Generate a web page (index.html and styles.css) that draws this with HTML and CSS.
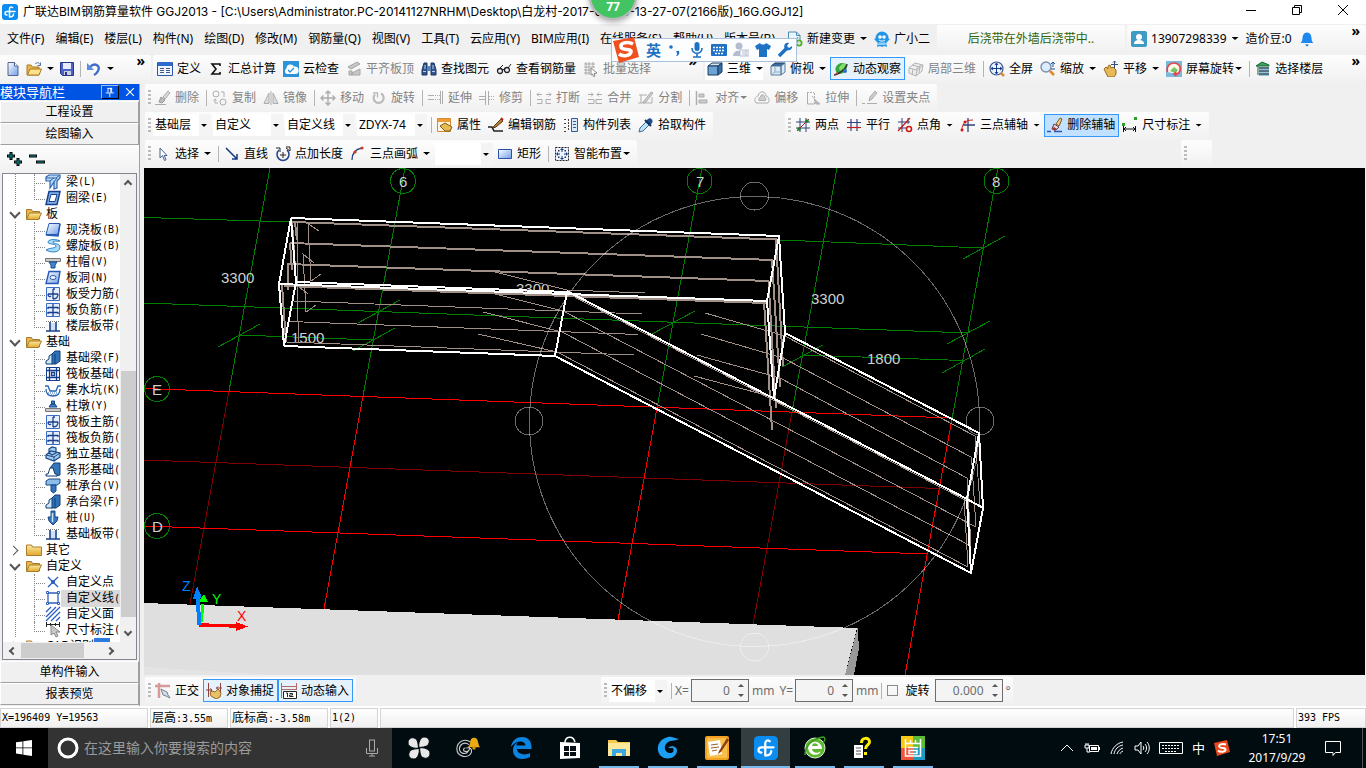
FILE: index.html
```html
<!DOCTYPE html>
<html lang="zh-CN">
<head>
    <meta charset="UTF-8">
    <meta name="viewport" content="width=device-width, initial-scale=1.0">
    <title>广联达BIM钢筋算量软件 GGJ2013</title>
    <link rel="stylesheet" href="styles.css">
</head>
<body>
    <!-- icon set -->
    <svg class="sprite" aria-hidden="true">
        <defs>
            <linearGradient id="blue" x1="0" y1="0" x2="1" y2="1"><stop offset="0" stop-color="#fff"/><stop offset="1" stop-color="#6f9fe8"/></linearGradient>
            <linearGradient id="gold" x1="0" y1="0" x2="0" y2="1"><stop offset="0" stop-color="#ffe9a0"/><stop offset="1" stop-color="#e0a92e"/></linearGradient>
        </defs>
        <symbol id="i-app" viewBox="0 0 16 16"><rect width="16" height="16" rx="3" fill="#0b8cf0"/><path d="M10.500 3.500C9 2.500 7.500 3 7.500 5v8M3 9.500C3 7.800 3.800 7.500 5 7.500h8M7.500 13c2.500 0 4-1 4-3M3 9.500c0 1 1 1.500 2 1.500" fill="none" stroke="#fff" stroke-width="1.500" stroke-linecap="round"/></symbol>
        <symbol id="i-new" viewBox="0 0 16 16"><path d="M3 1.500h6.500l3.500 3.500v9.500H3z" fill="url(#blue)" stroke="#55648c"/><path d="M9.500 1.500V5H13" fill="#fff" stroke="#55648c"/></symbol>
        <symbol id="i-open" viewBox="0 0 16 16"><path d="M1 14V4h4l1.500 2H13v8z" fill="#e8b64a" stroke="#a97a20"/><path d="M1.500 14L4 8h11.500L13 14z" fill="#ffe08a" stroke="#a97a20"/><path d="M9 3c2-2 4-1.500 5 .5m.5-2v3h-3" fill="none" stroke="#55759c"/></symbol>
        <symbol id="i-save" viewBox="0 0 16 16"><path d="M1.500 1.500h13v13h-11l-2-2z" fill="#4a62c8" stroke="#28368c"/><path d="M4 2h8v6H4z" fill="#e8ecfa"/><path d="M5 10h7v4H5z" fill="#c9cfdc"/><path d="M6 11h2v3H6z" fill="#28368c"/></symbol>
        <symbol id="i-undo" viewBox="0 0 16 16"><path d="M4 6c5-5 11-1 8 4-1 2-2 3-4 4" fill="none" stroke="#3e6ccc" stroke-width="2.400"/><path d="M1 2v7h7z" fill="#5d8be0"/></symbol>
        <symbol id="i-define" viewBox="0 0 16 16"><path d="M.5 1.500h15v13H.5z" fill="#eef4ff" stroke="#2c57a8"/><path d="M1 1h14v4H1z" fill="#2c6ccc"/><path d="M3 7.500h4M3 9.500h4M3 11.500h4M9 7.500h4M9 9.500h4M9 11.500h4" stroke="#44597c"/></symbol>
        <symbol id="i-sum" viewBox="0 0 16 16"><path d="M12 5V3H4l4 5-4 5h8v-2" fill="none" stroke="#111" stroke-width="1.600"/></symbol>
        <symbol id="i-cloud" viewBox="0 0 16 16"><rect width="16" height="16" fill="#2b93d8"/><path d="M4 13a3 3 0 0 1-.5-5.500A4 4 0 0 1 11 5.500a3.500 3.500 0 0 1 1.500 7.500z" fill="#fff"/><path d="M5 9l2 2 4-4" stroke="#2b93d8" stroke-width="1.400" fill="none"/></symbol>
        <symbol id="i-slab" viewBox="0 0 16 16"><path d="M2 6l9-5 3 2-9 5zM3 10h3v4H3zM6 12l8-4v6H6z" fill="#c8c8c8" stroke="#a4a4a4"/></symbol>
        <symbol id="i-find" viewBox="0 0 16 16"><path d="M1 14V9l2-7h3v12zM10 2h3l2 7v5h-5z" fill="#31558f" stroke="#1b3464"/><path d="M6 5h4v5H6z" fill="#5d83bd"/><path d="M2 10.500h3M11 10.500h3M4 4v4M12 4v4" stroke="#b9cdec"/></symbol>
        <symbol id="i-glasses" viewBox="0 0 16 16"><circle cx="4" cy="10" r="2.500" fill="#eef" stroke="#222" stroke-width="1.300"/><circle cx="11" cy="9" r="2.500" fill="#eef" stroke="#222" stroke-width="1.300"/><path d="M6 9l3-1M3 8l4-4M12 7l3-4" stroke="#222"/></symbol>
        <symbol id="i-batch" viewBox="0 0 16 16"><path d="M1 3h11M1 6h11M1 9h7M1 12h6M3 1v13M6 1v13M10 1v6" stroke="#aaa"/><path d="M8 7l6 5-3 .5 1 2.500-1.500.5-1-2.500L8 14z" fill="#fff" stroke="#888"/></symbol>
        <symbol id="i-cube" viewBox="0 0 16 16"><path d="M1 5l4-3h10l-4 3z" fill="#d4e5f6" stroke="#1e3c5c"/><path d="M1 5h10v9H1z" fill="#6da4d6" stroke="#1e3c5c"/><path d="M11 5l4-3v9l-4 3z" fill="#3570a8" stroke="#1e3c5c"/></symbol>
        <symbol id="i-top" viewBox="0 0 16 16"><path d="M1 5l4-3h10l-4 3z" fill="#3570a8" stroke="#1e3c5c"/><path d="M1 5h10v9H1zM11 5l4-3v9l-4 3z" fill="#dcebf8" stroke="#5a7a98"/><path d="M5 5v6h6M5 11l-4 3" stroke="#90aac4" fill="none"/></symbol>
        <symbol id="i-orbit" viewBox="0 0 16 16"><ellipse cx="8.500" cy="7.500" rx="6" ry="5" fill="#38a83c" transform="rotate(-35 8 8)"/><path d="M6 7c1-3 4-5 7-5l-2 5-4 3z" fill="#85df70"/><path d="M1 14c3 0 13-6 13-11" stroke="#333" stroke-width="1.400" fill="none"/><circle cx="12" cy="10" r="2" fill="#2c6fc8"/><path d="M1 14l4-4v3z" fill="#cc3528"/></symbol>
        <symbol id="i-part" viewBox="0 0 16 16"><path d="M1 7l6-5 8 2-1 6-6 5-7-3zM1 7l8 2 6-5M9 9l-1 6M4 4l8 2-1 6M5 8l-1 6M8 8l5-4" fill="#eee" stroke="#b4b4b4"/></symbol>
        <symbol id="i-full" viewBox="0 0 16 16"><circle cx="7.500" cy="7.500" r="6.500" fill="#eaf3ff" stroke="#3a5588" stroke-width="1.200"/><path d="M7.500 2v11M2 7.500h11M6 4l1.500-2L9 4M6 11l1.500 2L9 11M4 6L2 7.500 4 9M11 6l2 1.500L11 9" stroke="#153c8c" fill="none"/><path d="M12 12l3 3" stroke="#e08a30" stroke-width="2.500"/></symbol>
        <symbol id="i-zoom" viewBox="0 0 16 16"><circle cx="6" cy="6" r="5" fill="#dcecff" stroke="#7890b0" stroke-width="1.400"/><path d="M10 10l4 4" stroke="#e08a30" stroke-width="2.500"/><path d="M13 1v5M11 3l2-2 2 2M11 8h4" stroke="#234f94" fill="none"/></symbol>
        <symbol id="i-pan" viewBox="0 0 16 16"><path d="M1 8l2-2 2 2V5l2-1 1 3 2-1 3 3v4l-2 3H5z" fill="#e8b957" stroke="#946a24"/><path d="M11.500 0v7M8 3.500h7M10 1.500L11.500 0 13 1.500" stroke="#334f78" fill="none"/></symbol>
        <symbol id="i-rot" viewBox="0 0 16 16"><path d="M0 0h16v16H0z" fill="#7ab9dd"/><path d="M1.500 11C0 5 4 2 8 2s7 3 6 7c-.5 3-2 4-4 4" fill="#fff8e6" stroke="#e2454a" stroke-width="1.700"/><path d="M4 10l4-4 4 3-3 3z" fill="#73c46a"/><path d="M10.500 10v6l-4-3z" fill="#e2454a"/></symbol>
        <symbol id="i-floor" viewBox="0 0 16 16"><path d="M1 5l6-4 7 3v1z" fill="#37a55c" stroke="#1a6434"/><path d="M4 7h10M4 10h10M4 13h10" stroke="#27435e" stroke-width="1.500"/><path d="M4 8.500h10M4 11.500h10M4 14.500h10" stroke="#8fc6de"/><path d="M3 5v9" stroke="#1a6434"/></symbol>
        <symbol id="i-doc" viewBox="0 0 16 16"><path d="M1.500 1h8L13 4.500V13H1.500z" fill="#eaf6ff" stroke="#4e8cae"/><path d="M9.500 1v3.500H13M3 10c4 1 7-1 8-4" fill="none" stroke="#4e8cae"/><circle cx="12" cy="12" r="3.500" fill="#55ad2d"/><path d="M12 10v4M10 12h4" stroke="#fff"/></symbol>
        <symbol id="i-qq" viewBox="0 0 16 16"><circle cx="8" cy="7" r="6.500" fill="#2196e8"/><path d="M0 8l3-1v4zM16 8l-3-1v4zM4 11h8l1 5-3-1-2 1-2-1-3 1z" fill="#2196e8"/><path d="M4.500 11.500h7l.5 2.500H4z" fill="#8fd0f8"/><circle cx="6" cy="6" r="1.800" fill="#fff"/><circle cx="10" cy="6" r="1.800" fill="#fff"/><path d="M5 9c2 1.500 4 1.500 6 0" stroke="#fff" fill="none"/></symbol>
        <symbol id="i-user" viewBox="0 0 16 16"><rect width="16" height="16" rx="2" fill="#3e9bc4"/><circle cx="8" cy="6" r="3" fill="#fff"/><path d="M3 13c0-3 2-4 5-4s5 1 5 4z" fill="#fff"/></symbol>
        <symbol id="i-bell" viewBox="0 0 16 16"><path d="M1.500 12C4 10 3 7 4 4.500 5 .5 11 .5 12 4.500c1 2.500 0 5.500 2.500 7.500z" fill="#1e88f0"/><path d="M6 13.500h4L8 15.500z" fill="#1668c0"/></symbol>
        <!-- disabled edit tools -->
        <symbol id="i-brushg" viewBox="0 0 16 16"><path d="M0 14.500h11" stroke="#aaa"/><path d="M8 7l5-6 2 2-5 6z" fill="#d8d8d8" stroke="#aaa"/><path d="M4 12l2-5 4 3-3 3z" fill="#bbb" stroke="#999"/></symbol>
        <symbol id="i-copy" viewBox="0 0 16 16" fill="none" stroke="#adadad"><circle cx="4" cy="4" r="3"/><circle cx="11" cy="12" r="3"/><path d="M6 13H3V9M9 2h3v5M1.500 10.500L3 9l1.500 1.500"/></symbol>
        <symbol id="i-mirror" viewBox="0 0 16 16" fill="none" stroke="#adadad"><path d="M1 13.500L6 3v10.500zM15 13.500L10 3v10.500z" fill="#ddd"/><path d="M8 1v14"/></symbol>
        <symbol id="i-move" viewBox="0 0 16 16" fill="none" stroke="#adadad" stroke-width="1.400"><path d="M8 1v14M1 8h14M5.500 3.500L8 1l2.500 2.500M5.500 12.500L8 15l2.500-2.500M3.500 5.500L1 8l2.500 2.500M12.500 5.500L15 8l-2.500 2.500"/></symbol>
        <symbol id="i-rotate" viewBox="0 0 16 16" fill="none" stroke="#bbb" stroke-width="2.200"><path d="M10 3.500a5 5 0 1 1-6 1"/><path d="M2 3h4.500v4.500" stroke-width="1.400"/></symbol>
        <symbol id="i-extend" viewBox="0 0 16 16" fill="none" stroke="#adadad"><path d="M0 5.500h6M0 9.500h6"/><path d="M7 5.500h5M7 9.500h5" stroke-dasharray="1 1"/><path d="M12.500 1v13M14.500 1v13"/></symbol>
        <symbol id="i-trim" viewBox="0 0 16 16" fill="none" stroke="#adadad"><path d="M0 6.500h6M0 9.500h6M6.500 1v14M9.500 1v14"/><path d="M10 6.500h5M10 9.500h5" stroke-dasharray="1 1"/></symbol>
        <symbol id="i-break" viewBox="0 0 16 16" fill="none" stroke="#adadad"><path d="M1 9.500h5v4H1M15 9.500h-5v4h5M1 4.500h5M10 4.500h5M3 2.500l-2 2 2 2M13 2.500l2 2-2 2"/></symbol>
        <symbol id="i-merge" viewBox="0 0 16 16" fill="none" stroke="#adadad"><path d="M1 9.500h6v4H1M15 9.500H9v4h6M1 4.500h5M10 4.500h5M4 2.500l2 2-2 2M12 2.500l-2 2 2 2"/></symbol>
        <symbol id="i-split" viewBox="0 0 16 16" fill="none" stroke="#adadad"><path d="M1 5h8M0 13h14M3 5v8M14 7v6"/><path d="M6 11l7-9 2 1-7 9-3 1z" fill="#ccc"/></symbol>
        <symbol id="i-align" viewBox="0 0 16 16" fill="none" stroke="#adadad"><path d="M1.500 1v14" stroke-width="1.500"/><path d="M4 4h5v3H4zM4 10h8v3H4z" fill="#ccc"/></symbol>
        <symbol id="i-offset" viewBox="0 0 16 16" fill="none" stroke="#adadad"><path d="M2 13C-1 9 2 7 4 6c1-6 8-5 8 0 3 1 4 4 2 7z"/><path d="M5 10.500C4 8 6 8 6.500 7c0-3 4-3 4 0 1 1 2 2 1 3.500z" fill="#ccc"/></symbol>
        <symbol id="i-stretch" viewBox="0 0 16 16" fill="none" stroke="#adadad"><path d="M2.500 2v12h7"/><path d="M2 2.500h7M9.500 3v11M7 6l6 7" stroke-dasharray="2 1"/><path d="M10 10l5 4h-4z" fill="#bbb"/></symbol>
        <symbol id="i-grip" viewBox="0 0 16 16" fill="none" stroke="#adadad"><path d="M0 13.500h3M5 13.500h10"/><path d="M7 11l1-4 5-6 2 2-5 6z" fill="#ccc"/></symbol>
        <!-- component toolbar -->
        <symbol id="i-prop" viewBox="0 0 16 16"><path d="M.5 1.500h13v13H.5z" fill="#fff4df" stroke="#d98a2b"/><path d="M1 2h12v3H1z" fill="#ee9c38"/><path d="M3 9l5-3 7 4-2 4H8z" fill="#e8bb52" stroke="#7d5b1c"/></symbol>
        <symbol id="i-editbar" viewBox="0 0 16 16"><path d="M0 10h4l2 4h9" stroke="#222" stroke-width="1.600" fill="none"/><path d="M6 9l7-7 2 2-7 6-3 1z" fill="#b97e33" stroke="#5b3a12"/><path d="M13 1l2 2" stroke="#c22" stroke-width="2"/></symbol>
        <symbol id="i-list" viewBox="0 0 16 16"><path d="M1 2.500h3M1 6.500h3M1 10.500h3M1 14.500h3M5.500 2v12" stroke="#444" stroke-dasharray="2 1"/><path d="M8.500 1.500h6v13h-6z" fill="#dce8fb" stroke="#345a98"/><path d="M10 4.500h3M10 7.500h3M10 10.500h3" stroke="#345a98"/></symbol>
        <symbol id="i-pick" viewBox="0 0 16 16"><path d="M1 15l1-4 6-6 3 3-6 6z" fill="#bfe2f8" stroke="#3f6c94"/><path d="M8 4l2-2c2-2 6 1 4 4l-2 2z" fill="#1f4e8c"/><path d="M7 3l6 6" stroke="#10305c" stroke-width="2"/></symbol>
        <symbol id="i-p2" viewBox="0 0 16 16"><path d="M5 1v14M11 1v14M1 5h14M1 11h14" stroke="#30427a"/><path d="M2 14L14 2" stroke="#b82020"/><circle cx="4" cy="12" r="1.800" fill="#208020"/><circle cx="12" cy="4" r="1.800" fill="#208020"/></symbol>
        <symbol id="i-par" viewBox="0 0 16 16"><path d="M5 2v12M11 2v12M1 5.500h14" stroke="#30427a" stroke-width="1.200"/><path d="M1 10.500h14" stroke="#c02020" stroke-width="1.200"/></symbol>
        <symbol id="i-ang" viewBox="0 0 16 16"><path d="M5 1v14M1 5h12M1 11h8M11 1v6" stroke="#30427a"/><path d="M1 14L13 1" stroke="#d01818" stroke-width="1.200"/><circle cx="12" cy="12" r="2.500" stroke="#d01818" fill="none" stroke-width="1.600"/></symbol>
        <symbol id="i-arcaxis" viewBox="0 0 16 16"><path d="M8 1v14M3 8h12" stroke="#30427a" stroke-width="1.300"/><path d="M2 13C2 6 6 3 13 3" stroke="#d01818" fill="none"/><circle cx="2" cy="13" r="1.500" fill="#d01818"/><circle cx="5" cy="5" r="1.500" fill="#d01818"/></symbol>
        <symbol id="i-brush" viewBox="0 0 16 16"><path d="M0 14.500h4M7 14.500h8" stroke="#2c57b0" stroke-width="1.600"/><path d="M9 7l4-6 2 1-3 7z" fill="#f0d088" stroke="#7d5b1c"/><path d="M5 12l2-5 5 3-3 3z" fill="#dde" stroke="#6a3a4c"/><path d="M5 12l2-2 3 2-2 2z" fill="#a83430"/></symbol>
        <symbol id="i-dim" viewBox="0 0 16 16"><path d="M1.500 9v6M13.500 9v6M1 12h13M4 10l-2 2 2 2M11 10l2 2-2 2" stroke="#111" fill="none"/><path d="M0 6h3v3H0zM12 0h3v3h-3z" fill="#27a02c"/></symbol>
        <symbol id="i-arrow" viewBox="0 0 16 16"><path d="M5 2v10l2.500-2.500 2 5 1.500-.8-1.800-4.200H12z" fill="#fff" stroke="#44618c"/></symbol>
        <symbol id="i-line" viewBox="0 0 16 16"><path d="M2 2l11 11M13 8v5H8" stroke="#153a80" stroke-width="1.500" fill="none"/></symbol>
        <symbol id="i-ptlen" viewBox="0 0 16 16"><path d="M4 4a6 6 0 1 0 8 0" fill="none" stroke="#24448c" stroke-width="1.500"/><path d="M8 6v6M5 9h6M1 2h4v4M11 1h4v4l-4-3" stroke="#222" fill="none"/></symbol>
        <symbol id="i-arc3" viewBox="0 0 16 16"><path d="M2 14C2 7 6 3 12 2" stroke="#24448c" fill="none" stroke-width="1.300"/><circle cx="5" cy="6" r="1.600" fill="#d33a1e"/><circle cx="12" cy="2" r="1.600" fill="#d33a1e"/></symbol>
        <symbol id="i-rect" viewBox="0 0 16 16"><path d="M1.500 3.500h13v9h-13z" fill="url(#blue)" stroke="#2850a8"/></symbol>
        <symbol id="i-smart" viewBox="0 0 16 16"><path d="M1.500 1.500h13v13h-13z" fill="#edf4ff" stroke="#222" stroke-dasharray="2 1"/><path d="M8 2v4M8 10v4M2 8h4M10 8h4M6.500 3.500h3M6.500 12.500h3M3.500 6.500v3M12.500 6.500v3" stroke="#153a80"/><path d="M4 4h1.500v1.500H4zM10.500 4H12v1.500h-1.500zM4 10.500h1.500V12H4zM10.500 10.500H12V12h-1.500z" fill="#333"/></symbol>
        <symbol id="i-ortho" viewBox="0 0 16 16"><path d="M0 3h15M4 0v15" stroke="#d79a98" stroke-width="2.500"/><path d="M6 6l6 3 1 3 2 3-4-2-3-1z" fill="#d4dbe5" stroke="#5c6c82" stroke-width=".8"/></symbol>
        <symbol id="i-snap" viewBox="0 0 16 16"><path d="M2.500 0v14M0 7h6M14.500 0v9M10 5h6M4 5.500L6 7 4 8.500M12 3.500L10.500 5 12 6.500" stroke="#8f4040" fill="none"/><path d="M4 10l2-2 3 1 3-3 3 4-1 4-4 2-5-3z" fill="#eac066" stroke="#946a24"/></symbol>
        <symbol id="i-dyn" viewBox="0 0 16 16"><path d="M.5 0v15M15.500 0v6M0 3.500h16M0 6.500h16" stroke="#b56a6a"/><path d="M2.500 8.500h13v7h-13z" fill="#fff" stroke="#222"/><path d="M5 10h1.500v4M8.500 10.500h3V12h-3v1.500h4" stroke="#222" fill="none"/></symbol>
        <!-- tree -->
        <symbol id="t-open" viewBox="0 0 16 16"><path d="M.5 13V3.500h5l1 2h7V13z" fill="#e9b64b" stroke="#a67c2a"/><path d="M.5 13.500L3.500 7H15.500l-3 6.500z" fill="url(#gold)" stroke="#a67c2a"/></symbol>
        <symbol id="t-shut" viewBox="0 0 16 16"><path d="M.5 13.500V3h5l1 2h9v8.500z" fill="url(#gold)" stroke="#a67c2a"/></symbol>
        <symbol id="t-beam" viewBox="0 0 16 16"><path d="M1 3l3-2h11v3l-3 3v7l-3 1V8L5 14V7H1z" fill="#bcd8f4" stroke="#2a67b0" stroke-width="1.200"/><path d="M1 4h10l4-3M5 7l4-3M9 8l3-4" stroke="#2a67b0" fill="none"/></symbol>
        <symbol id="t-ring" viewBox="0 0 16 16"><path d="M4 1.500h11L12 14.500H1z" fill="#7fb0ea" stroke="#173f8c" stroke-width="1.500"/><path d="M6 4.500h6l-2 7H4z" fill="#fff" stroke="#173f8c"/></symbol>
        <symbol id="t-slab" viewBox="0 0 16 16"><path d="M4 1.500h11l-2 11H1z" fill="url(#blue)" stroke="#2458b4"/><path d="M1 13l12 1 2-12" stroke="#2458b4" stroke-width="1.500" fill="none"/></symbol>
        <symbol id="t-spiral" viewBox="0 0 16 16"><path d="M15 3C9 0 3 2 3 4c0 3 7 1 8 4 0 3-5 1-10 4 5 3 14 3 14-3 0-4-7-3-7-5 1-2 4 0 7-1z" fill="#a7dcfa" stroke="#3080c4"/></symbol>
        <symbol id="t-cap" viewBox="0 0 16 16"><path d="M.5 4.500h15v3H.5z" fill="#ccc" stroke="#777"/><path d="M4 8h8l-2 3v3H6v-3z" fill="#4188d8" stroke="#164888"/></symbol>
        <symbol id="t-hole" viewBox="0 0 16 16"><path d="M4 1.500h11l-2 12H1z" fill="url(#blue)" stroke="#2458b4" stroke-width="1.400"/><ellipse cx="8" cy="7.500" rx="3" ry="2" fill="#fff" stroke="#2458b4"/></symbol>
        <symbol id="t-force" viewBox="0 0 16 16"><path d="M1.500 1.500h13v13h-13z" fill="#e6effd" stroke="#3c6ec4"/><path d="M8 3v10M3 8h10M3 8c0 3 2 3 3 2M8 13c3 0 5-2 5-5M8 3h2" stroke="#173f8c" stroke-width="1.300" fill="none"/></symbol>
        <symbol id="t-neg" viewBox="0 0 16 16"><path d="M1.500 1.500h13v13h-13z" fill="#e6effd" stroke="#3c6ec4"/><path d="M8 2v12M3 5.500h10M3 10.500h10M3 5v2M13 5v2M3 10v2M13 10v2" stroke="#173f8c" stroke-width="1.300"/></symbol>
        <symbol id="t-band" viewBox="0 0 16 16"><path d="M1 3.500h14" stroke="#777" stroke-dasharray="1 1"/><path d="M1 13h14M5 4v9M11 4v9" stroke="#173f8c" stroke-width="1.600"/><path d="M6 5h4v7H6z" fill="#cfe0fa"/></symbol>
        <symbol id="t-fbeam" viewBox="0 0 16 16"><path d="M6 14V5l4-4h5v10l-4 3z" fill="#2e73ba" stroke="#123f74"/><path d="M1 14v-3l3-2V6l3-2v10zM10 14V4" fill="#cde4f8" stroke="#123f74"/></symbol>
        <symbol id="t-raft" viewBox="0 0 16 16"><path d="M1.500 1.500h13v13h-13z" fill="#fff" stroke="#123f8c"/><path d="M4.500 1v14M11.500 1v14M1 4.500h14M1 11.500h14M6.500 6.500h3v3h-3z" stroke="#123f8c" stroke-width="1.300" fill="none"/></symbol>
        <symbol id="t-pit" viewBox="0 0 16 16"><path d="M0 4h3l2 5h6l2-5h3M1 7c0 5 3 7 7 7s7-2 7-7" stroke="#2463b8" stroke-width="1.300" fill="none"/><path d="M3 11h10M6 13h5" stroke="#2463b8" stroke-dasharray="1 1"/></symbol>
        <symbol id="t-pier" viewBox="0 0 16 16"><path d="M4 9l2-3h4l2 3zM6.500 3h3v3h-3z" fill="#3e82d0" stroke="#164888"/><path d="M.5 10.500h15v3H.5z" fill="#ccc" stroke="#777"/></symbol>
        <symbol id="t-iso" viewBox="0 0 16 16"><path d="M1 9l5-4 9 2v4l-6 4-8-3zM4 3l3-2 4 1v5l-4 2-3-2z" fill="#a7cbee" stroke="#174a84" stroke-width="1.200"/><path d="M1 9l8 2 6-4M9 11v4" stroke="#174a84" fill="none"/></symbol>
        <symbol id="t-strip" viewBox="0 0 16 16"><path d="M5 6l4-5h6v12l-4 1z" fill="#3476bc" stroke="#123f74"/><path d="M1 14v-2h2l2-6h3l2 6h2v2z" fill="#fff" stroke="#123f74"/></symbol>
        <symbol id="t-pcap" viewBox="0 0 16 16"><path d="M1 3l3-2h11v4l-3 2H1z" fill="#8dbcea" stroke="#174a84"/><path d="M6 7h5v6l-2.500 2L6 13z" fill="#3476bc" stroke="#174a84"/></symbol>
        <symbol id="t-pile" viewBox="0 0 16 16"><path d="M6 1h4v6h3l-1 4-4 4-4-4-1-4h3z" fill="#3476bc" stroke="#174a84"/><path d="M7.500 3v9" stroke="#cfe4f8" stroke-width="1.500"/></symbol>
        <symbol id="t-pt" viewBox="0 0 16 16"><path d="M3 3l10 10M13 3L3 13" stroke="#2a5fc0" stroke-width="1.300"/><circle cx="8" cy="8" r="2" fill="#2a5fc0"/></symbol>
        <symbol id="t-ln" viewBox="0 0 16 16"><path d="M3 3h10v10H3z" fill="none" stroke="#2a5fc0" stroke-width="1.300"/><path d="M1.500 1.500h2v2h-2zM12.500 1.500h2v2h-2zM1.500 12.500h2v2h-2zM12.500 12.500h2v2h-2z" fill="#fff" stroke="#2a5fc0"/></symbol>
        <symbol id="t-face" viewBox="0 0 16 16"><path d="M1 6l5-5M1 11L11 1M1 15L15 1M6 15l9-9M11 15l4-4" stroke="#2a5fc0" stroke-width="1.300"/></symbol>
        <symbol id="t-dim" viewBox="0 0 16 16"><path d="M1.500 0v5M14.500 0v5M1 2.500h13M5.500 1v3M10.500 1v3" stroke="#222"/><path d="M6 3v10l3-2 2 4 2-1-2-4h4z" fill="#c8c8c8" stroke="#888"/></symbol>
        <symbol id="t-new" viewBox="0 0 16 16"><path d="M0 0h16v8H0z" fill="#2e7be0"/></symbol>
    </svg>

    <div class="app">
        <header class="titlebar">
            <svg class="ico"><use href="#i-app"/></svg>
            <h1>广联达BIM钢筋算量软件 GGJ2013 - [C:\Users\Administrator.PC-20141127NRHM\Desktop\白龙村-2017-09-25-13-27-07(2166版)_16G.GGJ12]</h1>
            <div class="winbtns">
                <button aria-label="最小化"><svg viewBox="0 0 12 12"><path d="M1 6.500h10"/></svg></button>
                <button aria-label="还原"><svg viewBox="0 0 12 12"><path d="M1.500 3.500h7v7h-7zM3.500 3.500v-2h7v7h-2"/></svg></button>
                <button aria-label="关闭"><svg viewBox="0 0 12 12"><path d="M1 1l10 10M11 1L1 11"/></svg></button>
            </div>
        </header>

        <div class="menubar">
            <nav>
                <a href="#">文件(F)</a><a href="#">编辑(E)</a><a href="#">楼层(L)</a><a href="#">构件(N)</a><a href="#">绘图(D)</a><a href="#">修改(M)</a><a href="#">钢筋量(Q)</a><a href="#">视图(V)</a><a href="#">工具(T)</a><a href="#">云应用(Y)</a><a href="#">BIM应用(I)</a><a href="#">在线服务(S)</a><a href="#">帮助(H)</a><a href="#">版本号(B)</a>
            </nav>
            <button class="btn"><svg class="ico"><use href="#i-doc"/></svg>新建变更<i class="tri"></i></button>
            <button class="btn"><svg class="ico"><use href="#i-qq"/></svg>广小二</button>
            <a class="strip notice" href="#">后浇带在外墙后浇带中..</a>
            <div class="strip account">
                <button class="btn"><svg class="ico"><use href="#i-user"/></svg>13907298339<i class="tri"></i></button>
                <button class="btn">造价豆:0</button>
                <button class="btn" aria-label="消息"><svg class="ico"><use href="#i-bell"/></svg></button>
                <span class="more">»</span>
            </div>
        </div>

        <div class="mainbar">
            <div class="strip quick">
                <button class="btn" aria-label="新建"><svg class="ico"><use href="#i-new"/></svg></button>
                <button class="btn" aria-label="打开"><svg class="ico"><use href="#i-open"/></svg><i class="tri"></i></button>
                <button class="btn" aria-label="保存"><svg class="ico"><use href="#i-save"/></svg></button>
                <i class="sep"></i>
                <button class="btn" aria-label="撤销"><svg class="ico"><use href="#i-undo"/></svg><i class="tri"></i></button>
                <span class="more">»</span>
            </div>
            <div class="strip tools">
                <button class="btn"><svg class="ico"><use href="#i-define"/></svg>定义</button>
                <button class="btn"><svg class="ico"><use href="#i-sum"/></svg>汇总计算</button>
                <button class="btn"><svg class="ico"><use href="#i-cloud"/></svg>云检查</button>
                <button class="btn" disabled><svg class="ico"><use href="#i-slab"/></svg>平齐板顶</button>
                <button class="btn"><svg class="ico"><use href="#i-find"/></svg>查找图元</button>
                <button class="btn"><svg class="ico"><use href="#i-glasses"/></svg>查看钢筋量</button>
                <button class="btn" disabled><svg class="ico"><use href="#i-batch"/></svg>批量选择</button>
                <span class="more">»</span>
            </div>
            <div class="strip view">
                <button class="btn drop"><svg class="ico"><use href="#i-cube"/></svg>三维<i class="tri"></i></button>
                <button class="btn"><svg class="ico"><use href="#i-top"/></svg>俯视<i class="tri"></i></button>
                <button class="btn on"><svg class="ico"><use href="#i-orbit"/></svg>动态观察</button>
                <button class="btn" disabled><svg class="ico"><use href="#i-part"/></svg>局部三维</button>
                <i class="sep"></i>
                <button class="btn"><svg class="ico"><use href="#i-full"/></svg>全屏</button>
                <button class="btn"><svg class="ico"><use href="#i-zoom"/></svg>缩放<i class="tri"></i></button>
                <button class="btn"><svg class="ico"><use href="#i-pan"/></svg>平移<i class="tri"></i></button>
                <button class="btn"><svg class="ico"><use href="#i-rot"/></svg>屏幕旋转<i class="tri tight"></i></button>
                <i class="sep"></i>
                <button class="btn"><svg class="ico"><use href="#i-floor"/></svg>选择楼层</button>
                <span class="more">»</span>
            </div>
        </div>

        <main>
            <aside>
                <div class="panelhead"><span>模块导航栏</span>
                    <button class="pin" aria-label="固定"><svg viewBox="0 0 15 11"><path d="M5.500 1v5M9.500 1v5M5 1.500h5M3 6.500h9M7.500 7v4M8.500 1v5"/></svg></button>
                    <button aria-label="关闭"><svg viewBox="0 0 9 9"><path d="M1 1l7 7M8 1L1 8"/></svg></button>
                </div>
                <button class="tab">工程设置</button>
                <button class="tab">绘图输入</button>
                <div class="expand">
                    <button aria-label="全部展开"><svg viewBox="0 0 16 16"><path d="M0 5h8M4 1v8M7 11h8M11 7v8" stroke="#000" stroke-width="3"/><path d="M1 5h6M4 2v6M8 11h6M11 8v6" stroke="#0a9090"/></svg></button>
                    <button aria-label="全部折叠"><svg viewBox="0 0 16 16"><path d="M0 5h8M7 11h9" stroke="#000" stroke-width="3"/><path d="M1 5h6M8 11h7" stroke="#0a9090"/></svg></button>
                </div>
                <div class="treebox">
                    <div class="treerow">
                        <ul class="tree">
                            <li class="leaf"><svg class="ico"><use href="#t-beam"/></svg>梁<b>(L)</b></li>
                            <li class="leaf end"><svg class="ico"><use href="#t-ring"/></svg>圈梁<b>(E)</b></li>
                            <li class="folder open"><svg class="ico"><use href="#t-open"/></svg>板</li>
                            <li class="leaf"><svg class="ico"><use href="#t-slab"/></svg>现浇板<b>(B)</b></li>
                            <li class="leaf"><svg class="ico"><use href="#t-spiral"/></svg>螺旋板<b>(B)</b></li>
                            <li class="leaf"><svg class="ico"><use href="#t-cap"/></svg>柱帽<b>(V)</b></li>
                            <li class="leaf"><svg class="ico"><use href="#t-hole"/></svg>板洞<b>(N)</b></li>
                            <li class="leaf"><svg class="ico"><use href="#t-force"/></svg>板受力筋<b>(</b></li>
                            <li class="leaf"><svg class="ico"><use href="#t-neg"/></svg>板负筋<b>(F)</b></li>
                            <li class="leaf end"><svg class="ico"><use href="#t-band"/></svg>楼层板带<b>(</b></li>
                            <li class="folder open"><svg class="ico"><use href="#t-open"/></svg>基础</li>
                            <li class="leaf"><svg class="ico"><use href="#t-fbeam"/></svg>基础梁<b>(F)</b></li>
                            <li class="leaf"><svg class="ico"><use href="#t-raft"/></svg>筏板基础<b>(</b></li>
                            <li class="leaf"><svg class="ico"><use href="#t-pit"/></svg>集水坑<b>(K)</b></li>
                            <li class="leaf"><svg class="ico"><use href="#t-pier"/></svg>柱墩<b>(Y)</b></li>
                            <li class="leaf"><svg class="ico"><use href="#t-force"/></svg>筏板主筋<b>(</b></li>
                            <li class="leaf"><svg class="ico"><use href="#t-neg"/></svg>筏板负筋<b>(</b></li>
                            <li class="leaf"><svg class="ico"><use href="#t-iso"/></svg>独立基础<b>(</b></li>
                            <li class="leaf"><svg class="ico"><use href="#t-strip"/></svg>条形基础<b>(</b></li>
                            <li class="leaf"><svg class="ico"><use href="#t-pcap"/></svg>桩承台<b>(V)</b></li>
                            <li class="leaf"><svg class="ico"><use href="#t-fbeam"/></svg>承台梁<b>(F)</b></li>
                            <li class="leaf"><svg class="ico"><use href="#t-pile"/></svg>桩<b>(U)</b></li>
                            <li class="leaf end"><svg class="ico"><use href="#t-band"/></svg>基础板带<b>(</b></li>
                            <li class="folder"><svg class="ico"><use href="#t-shut"/></svg>其它</li>
                            <li class="folder open"><svg class="ico"><use href="#t-open"/></svg>自定义</li>
                            <li class="leaf"><svg class="ico"><use href="#t-pt"/></svg>自定义点</li>
                            <li class="leaf picked"><svg class="ico"><use href="#t-ln"/></svg><span>自定义线<b>(</b></span></li>
                            <li class="leaf"><svg class="ico"><use href="#t-face"/></svg>自定义面</li>
                            <li class="leaf end"><svg class="ico"><use href="#t-dim"/></svg>尺寸标注<b>(</b></li>
                            <li class="folder"><svg class="ico"><use href="#t-shut"/></svg>CAD识别<svg class="ico"><use href="#t-new"/></svg></li>
                        </ul>
                        <div class="vscroll"><i class="chev up"></i><i class="thumb"></i><i class="chev down"></i></div>
                    </div>
                    <div class="hscroll"><i class="chev left"></i><i class="thumb"></i><i class="chev right"></i></div>
                </div>
                <button class="tab">单构件输入</button>
                <button class="tab">报表预览</button>
            </aside>

            <section class="work">
                <div class="bar bar-edit">
                    <div class="strip">
                        <i class="grip"></i>
                        <button class="btn" disabled><svg class="ico"><use href="#i-brushg"/></svg>删除</button>
                        <i class="sep"></i>
                        <button class="btn" disabled><svg class="ico"><use href="#i-copy"/></svg>复制</button>
                        <button class="btn" disabled><svg class="ico"><use href="#i-mirror"/></svg>镜像</button>
                        <i class="sep"></i>
                        <button class="btn" disabled><svg class="ico"><use href="#i-move"/></svg>移动</button>
                        <button class="btn" disabled><svg class="ico"><use href="#i-rotate"/></svg>旋转</button>
                        <i class="sep"></i>
                        <button class="btn" disabled><svg class="ico"><use href="#i-extend"/></svg>延伸</button>
                        <button class="btn" disabled><svg class="ico"><use href="#i-trim"/></svg>修剪</button>
                        <i class="sep"></i>
                        <button class="btn" disabled><svg class="ico"><use href="#i-break"/></svg>打断</button>
                        <button class="btn" disabled><svg class="ico"><use href="#i-merge"/></svg>合并</button>
                        <button class="btn" disabled><svg class="ico"><use href="#i-split"/></svg>分割</button>
                        <i class="sep"></i>
                        <button class="btn" disabled><svg class="ico"><use href="#i-align"/></svg>对齐<i class="tri tight"></i></button>
                        <button class="btn" disabled><svg class="ico"><use href="#i-offset"/></svg>偏移</button>
                        <button class="btn" disabled><svg class="ico"><use href="#i-stretch"/></svg>拉伸</button>
                        <i class="sep"></i>
                        <button class="btn" disabled><svg class="ico"><use href="#i-grip"/></svg>设置夹点</button>
                    </div>
                </div>
                <div class="bar bar-comp">
                    <div class="strip">
                        <i class="grip"></i>
                        <label class="combo short"><select aria-label="楼层"><option>基础层</option></select></label>
                        <label class="combo"><select aria-label="构件类别"><option>自定义</option></select></label>
                        <label class="combo"><select aria-label="构件类型"><option>自定义线</option></select></label>
                        <label class="combo"><select aria-label="构件名称"><option>ZDYX-74</option></select></label>
                        <i class="sep"></i>
                        <button class="btn"><svg class="ico"><use href="#i-prop"/></svg>属性</button>
                        <button class="btn"><svg class="ico"><use href="#i-editbar"/></svg>编辑钢筋</button>
                        <button class="btn"><svg class="ico"><use href="#i-list"/></svg>构件列表</button>
                        <button class="btn"><svg class="ico"><use href="#i-pick"/></svg>拾取构件</button>
                    </div>
                    <div class="strip axis">
                        <i class="grip"></i>
                        <button class="btn"><svg class="ico"><use href="#i-p2"/></svg>两点</button>
                        <button class="btn"><svg class="ico"><use href="#i-par"/></svg>平行</button>
                        <button class="btn"><svg class="ico"><use href="#i-ang"/></svg>点角<i class="tri"></i></button>
                        <button class="btn"><svg class="ico"><use href="#i-arcaxis"/></svg>三点辅轴<i class="tri"></i></button>
                        <button class="btn on strong"><svg class="ico"><use href="#i-brush"/></svg>删除辅轴</button>
                        <button class="btn"><svg class="ico"><use href="#i-dim"/></svg>尺寸标注<i class="tri"></i></button>
                    </div>
                </div>
                <div class="bar bar-draw">
                    <div class="strip">
                        <i class="grip"></i>
                        <button class="btn"><svg class="ico"><use href="#i-arrow"/></svg>选择<i class="tri"></i></button>
                        <i class="sep"></i>
                        <button class="btn"><svg class="ico"><use href="#i-line"/></svg>直线</button>
                        <button class="btn"><svg class="ico"><use href="#i-ptlen"/></svg>点加长度</button>
                        <button class="btn"><svg class="ico"><use href="#i-arc3"/></svg>三点画弧<i class="tri"></i></button>
                        <label class="combo short"><select aria-label="画弧方式"><option></option></select></label>
                        <button class="btn"><svg class="ico"><use href="#i-rect"/></svg>矩形</button>
                        <i class="sep"></i>
                        <button class="btn"><svg class="ico"><use href="#i-smart"/></svg>智能布置<i class="tri tight"></i></button>
                    </div>
                    <div class="strip stub"><i class="grip"></i></div>
                </div>

                <div class="viewport">
                    <svg viewBox="144 168 1221 507" preserveAspectRatio="xMinYMin slice">
                        <g class="dark">
                            <path d="M229 391L190 604M792 412L753 625M144 460L939 488.500"/>
                        </g>
                        <g class="red">
                            <path d="M144 388.500L953 418M144 526L928 554M363 396L324 609M657 408L618 620M952 419L905 675"/>
                        </g>
                        <g class="green">
                            <path d="M270 168L229 391M405 168L363 396M702 168L657 408M837 168L792 412M998 168L952 419"/>
                            <path d="M144 217.500L292 222M779 240L984 248M144 303L969 333M239 335L374 340M803 355L963 360.500"/>
                            <path d="M218 347L260 324M358 323L400 300M353 351L395 328M652 334L695 311M782 367L823 345M963 259L1005 236M947 344L990 321M942 373L985 349"/>
                            <circle cx="403" cy="181" r="12.500"/><circle cx="699.500" cy="181" r="12.500"/><circle cx="996.500" cy="181" r="12.500"/>
                            <circle cx="157" cy="389" r="12.500"/><circle cx="157" cy="526" r="12.500"/>
                        </g>
                        <g class="num">
                            <text x="221" y="283">3300</text><text x="811" y="304">3300</text><text x="291" y="343">1500</text><text x="867" y="364">1800</text>
                            <text x="516" y="294">3300</text>
                            <text x="399" y="187">6</text><text x="696" y="187">7</text><text x="992" y="187">8</text><text x="152" y="395">E</text><text x="152" y="532">D</text>
                        </g>
                        <path d="M500 291L560 293V299H500z" fill="#000"/>
                        <g class="slab">
                            <path d="M144 603L857 628L845 675H144z" fill="#dfdfdf"/>
                            <path d="M144 667L275 675H144z" fill="#e4e4e4"/>
                            <path d="M857.500 628L859 648L854 675H845z" fill="#999"/>
                        </g>
                        <!-- rebar -->
                        <g class="bar2">
                            <path d="M292 222L777 239.500M290 243L773 260M287 264L769 281M284 286L766 303"/>
                            <path d="M292 222L296 284M290 243L292 270M287.500 264L288 290M282 285L286 342M295 222L297 240"/>
                            <path d="M776 240L783 366M772 260L780 387M768.500 281L776 408M764 302L772 430"/>
                        </g>
                        <g class="bar1">
                            <path d="M294 301L642 314M290 321.500L638 334.500M287 342L634 355M567 290L645 293M297 223L297 300M297 300L299 343"/>
                            <path d="M319 231L308 223.500L311 281L321 274M314 263L303 254L306 312L316 305M308 294L295 284"/>
                            <path d="M495 272L567 290M495 294L563 311L976 527M483 312L562 332L971 546M478 334L557 352L968 567"/>
                            <path d="M705 313L785 336L975 436M701 334L783 358L971 457M697 355L780 378L967 478M694 376L773 397M567 293L967 501"/>
                            <path d="M975 436L980 505M971.500 457L976 527M967 478L971 546M964 499L968 567"/>
                        </g>
                        <g class="edge">
                            <path d="M291 218L779 236L785 333L774 398L767 301L779 236M291 218L279 284L284 346L296 282z"/>
                            <path d="M279 284L767 301M296 282L567 292L555 356L284 346"/>
                            <path d="M567 291L967 499L983 508L979 433L785 333M555 356L971 573L983 508M979 433L967 499L971 573"/>
                        </g>
                        <g class="orbit">
                            <circle cx="754.500" cy="421.500" r="225"/><circle cx="754.500" cy="196" r="14"/><circle cx="529" cy="421" r="14"/><circle cx="754.500" cy="647" r="14"/><circle cx="980" cy="421" r="14"/>
                        </g>
                        <g class="gizmo">
                            <path d="M201 622L203 604" stroke="#0f0" stroke-width="3"/><path d="M198 602L204 594L208 602z" fill="#0f0"/>
                            <path d="M199 625L238 626" stroke="#f00" stroke-width="3.500"/><path d="M236 622L248 626.500L236 631z" fill="#f00"/>
                            <path d="M199 625L198 598" stroke="#0080ff" stroke-width="4"/><path d="M193 599L197 586L202 598z" fill="#0080ff"/>
                            <text x="182" y="591" fill="#0080ff">Z</text><text x="212" y="604" fill="#0f0">Y</text><text x="237" y="621" fill="#f00">X</text>
                        </g>
                    </svg>
                </div>

                <div class="bar bar-snap">
                    <div class="strip">
                        <i class="grip"></i>
                        <button class="btn"><svg class="ico"><use href="#i-ortho"/></svg>正交</button>
                        <button class="btn on"><svg class="ico"><use href="#i-snap"/></svg>对象捕捉</button>
                        <button class="btn on"><svg class="ico"><use href="#i-dyn"/></svg>动态输入</button>
                    </div>
                    <div class="strip coords">
                        <i class="grip"></i>
                        <label class="combo short"><select aria-label="偏移方式"><option>不偏移</option></select></label>
                        <i class="sep"></i>
                        <label class="fld" for="offx">X=</label><span class="spin"><input id="offx" value="0"></span><span class="fld">mm</span>
                        <label class="fld" for="offy">Y=</label><span class="spin"><input id="offy" value="0"></span><span class="fld">mm</span>
                        <i class="sep"></i>
                        <input type="checkbox" id="rot"><label class="rotl" for="rot">旋转</label>
                        <span class="spin wide"><input aria-label="角度" value="0.000"></span><span class="fld">°</span>
                    </div>
                </div>
            </section>
        </main>

        <footer class="status">
            <span class="c1">X=196409 Y=19563</span><span class="c2"><em>层高</em>:3.55m</span><span class="c3"><em>底标高</em>:-3.58m</span><span class="c4">1(2)</span><span class="c5"></span><span class="c6">393 FPS</span>
        </footer>

        <div class="taskbar">
            <button class="start" aria-label="开始"><svg viewBox="0 0 16 16"><path d="M0 2.300l6.500-.9v6.100H0zM7.300 1.300L16 0v7.500H7.300zM0 8.300h6.500v6.200L0 13.600zM7.300 8.300H16V16l-8.700-1.300z" fill="#fff"/></svg></button>
            <label class="search"><svg class="cortana" viewBox="0 0 22 22"><circle cx="11" cy="11" r="9" fill="none" stroke="#fff" stroke-width="3"/></svg><input type="text" placeholder="在这里输入你要搜索的内容"><svg class="mic" viewBox="0 0 12 18"><rect x="3.500" y="1" width="5" height="11" fill="none" stroke="#aaa"/><path d="M.5 9v5.500h11V9M6 14.500V17M3 17h6" fill="none" stroke="#aaa"/></svg></label>
            <div class="apps">
                <button aria-label="花瓣"><svg viewBox="0 0 24 24"><path d="M12 11.500C11 8 13 1 17 1c4 0 6 3 5 6-1 4-6 4-10 4.500zM12.500 12C16 11 23 13 23 17c0 4-3 6-6 5-4-1-4-6-4.500-10zM12 12.500C13 16 11 23 7 23c-4 0-6-3-5-6 1-4 6-4 10-4.500zM11.500 12C8 13 1 11 1 7c0-4 3-6 6-5 4 1 4 6 4.500 10z" fill="#e8e8e8" stroke="#010c10"/></svg></button>
                <button aria-label="G助手"><svg viewBox="0 0 28 24"><path d="M17 5C10 0 1 5 1 13c0 10 14 12 17 4 1-4-2-6-6-5M15 8c-5-4-11 0-11 5 0 6 8 7 10 3M11 12c-3 0-3 4 0 4 4 1 6-3 4-6" fill="none" stroke="#ccc" stroke-width="1.300"/><path d="M14 11c4-3 1-11 7-11s4 8 7 11z" fill="#eaaa12"/><circle cx="21" cy="12" r="2" fill="#d6920a"/></svg></button>
                <i class="gap"></i>
                <button aria-label="Edge"><svg viewBox="0 0 24 24"><path d="M2 11C3 4 8 1 13 1c7 0 10 5 9.500 12H8c0 5 8 7 13 4v4c-8 4-17 2-17-7 0-4 2-6 5-8-1 1-1.500 2-1.500 3.500h9C16 4 7 4 2 11z" fill="#0a84e0"/></svg></button>
                <button aria-label="应用商店"><svg viewBox="0 0 24 24"><path d="M2 6l20 1v15L2 23z" fill="#fff"/><path d="M7 7c0-7 8-8 10-1" fill="none" stroke="#fff" stroke-width="1.500"/><path d="M6 10h5v5H6zM12 10h6v5h-6zM6 16h5v4H6zM12 16h6v4h-6z" fill="#061014"/></svg></button>
                <button class="run" aria-label="文件资源管理器"><svg viewBox="0 0 24 24"><path d="M1 4h8l2 2h12v14H1z" fill="#f5c84c"/><path d="M1 7h22v13H1z" fill="#ffe79a"/><path d="M5 20v-7h14v7h-4v-3H9v3z" fill="#3ba8e0"/></svg></button>
                <button class="run" aria-label="广联达G"><svg viewBox="0 0 24 24"><path d="M23 3c-5 3-9 0-13 5-3 4 0 10 5 9 3-1 3-3 2-5h-5c3-3 9-2 9 3-1 8-12 10-17 4C-1 12 3 3 12 1c4-1 7 2 11 2z" fill="#1da0f4"/></svg></button>
                <button class="run" aria-label="便笺"><svg viewBox="0 0 24 24"><rect width="24" height="24" rx="2" fill="#f2a01e"/><rect x="2" y="2" width="20" height="20" fill="#f8c04a"/><path d="M3 6l12-2 2 14-12 2z" fill="#fff"/><path d="M6 9l7-1M6 12l8-1M7 15l5-1" stroke="#9a6020"/><path d="M22 2l-8 13-1 3 3-2L24 4z" fill="#8c4014"/></svg></button>
                <button class="run current" aria-label="广联达"><svg viewBox="0 0 16 16"><use href="#i-app"/></svg></button>
                <button class="run" aria-label="浏览器"><svg viewBox="0 0 24 24"><circle cx="12" cy="12" r="10" fill="#5bb82c" stroke="#dff2d2"/><path d="M5 12c1-9 14-8 14 1H9c0 4 6 5 9 2-2 6-12 5-13-3zM9 10h6c0-3-5-4-6 0z" fill="#fff"/><path d="M2 19C2 8 12 2 20 1c3 0 2 4 0 6" fill="none" stroke="#3c9a18" stroke-width="1.500"/></svg></button>
                <button class="run" aria-label="帮助"><svg viewBox="0 0 24 24"><path d="M2 9h9v13H2z" fill="#fff"/><path d="M4 12h5M4 15h5M4 18h5" stroke="#555"/><path d="M9.500 7c0-6 8-6 8-1 0 3-4 3-4 7M13.500 16v3" stroke="#ffee00" stroke-width="3" fill="none"/></svg></button>
                <button class="run" aria-label="图形算量"><svg viewBox="0 0 24 24"><path d="M0 0h12v12H0z" fill="#f7c914"/><path d="M12 0h12v12H12z" fill="#5cbc3a"/><path d="M0 12h12v12H0z" fill="#f0543a"/><path d="M12 12h12v12H12z" fill="#1d9cc4"/><path d="M4.500 3v17h15V3M4 7.500h16M7 11.500h10M8 14.500h8v3H8zM9.500 4v4M14.500 4v4" fill="none" stroke="#fff" stroke-width="1.500"/></svg></button>
            </div>
            <div class="tray">
                <svg viewBox="0 0 16 16"><path d="M2 11l6-6 6 6" class="ln"/></svg>
                <svg viewBox="0 0 16 16"><path d="M5.500 5.500h9v6h-9zM15.500 7v3" class="ln"/><path d="M7 7h6v3H7z" fill="#fff"/><path d="M1 5h4v3H1zM3 8v4h3M2 3v2M4 3v2" class="ln"/></svg>
                <svg viewBox="0 0 16 16"><path d="M2 14C3 8 8 3 14 2M5 14c1-5 4-8 9-9M8 14c1-3 3-5 6-6M11 14c0-1 1-2 3-3" class="ln"/></svg>
                <svg viewBox="0 0 16 16"><path d="M1 6h3l3-4v12l-3-4H1zM9 6c1 1 1 3 0 4M11 4c2 2 2 6 0 8M13 2c3 3 3 9 0 12" class="ln"/></svg>
                <svg class="kbd" viewBox="0 0 24 16"><path d="M.5 2.500h23v11H.5z" class="ln"/><path d="M3 5.500h18M3 8.500h18M6 11.500h12" class="ln" stroke-dasharray="2 1"/></svg>
                <span>中</span>
                <svg viewBox="0 0 16 16"><path d="M0 3l13-3 3 12-13 4z" fill="#e9481c"/><path d="M12 4.500C8 3 4 5 5.500 7s6 0 6 2.500S6 12.500 4 10.500" fill="none" stroke="#fff" stroke-width="2"/></svg>
                <time>17:51<br>2017/9/29</time>
                <svg class="note" viewBox="0 0 18 16"><path d="M1.500 1.500h15v11h-5l-2.500 3v-3H1.500z" class="ln"/></svg>
            </div>
        </div>

        <div class="speed">77</div>
        <div class="ime">
            <svg class="sogou" viewBox="0 0 28 28"><path d="M1 5l21-4 5 20-20 6z" fill="#f0501e"/><path d="M21 8C15 5 8 7 9 11s11 1 10 5-8 5-12 2" fill="none" stroke="#fff" stroke-width="3.500"/></svg>
            <span>英</span>
            <svg viewBox="0 0 16 16"><circle cx="4" cy="5" r="1.800" fill="#1d72c4"/><path d="M9 9h3c1 3-1 5-3 5 2-2 1-3 0-5z" fill="#1d72c4"/></svg>
            <svg viewBox="0 0 16 16"><rect x="5.500" y="0" width="5" height="9" rx="2.500" fill="#1d72c4"/><path d="M3 6c0 7 10 7 10 0M8 11v4M4 15h8" fill="none" stroke="#1d72c4" stroke-width="1.600"/></svg>
            <svg viewBox="0 0 16 16"><rect y="2" width="16" height="12" rx="1" fill="#1d72c4"/><path d="M2 5.500h12M2 8.500h12M4 11.500h8" stroke="#fff" stroke-width="1.400" stroke-dasharray="2 1"/></svg>
            <svg viewBox="0 0 16 16"><circle cx="6" cy="4" r="3.500" fill="#b4bdd0"/><path d="M0 14c0-7 11-7 11 0z" fill="#b4bdd0"/><path d="M7 8h9v6H7z" fill="#fff" stroke="#b4bdd0"/><path d="M10 9v4M12 9h2v4h-2z" stroke="#b4bdd0" fill="none"/></svg>
            <svg viewBox="0 0 16 16"><path d="M5 1c1 2 5 2 6 0l5 3-2 4-2-1v8H4V7L2 8 0 4z" fill="#1d72c4"/></svg>
            <svg viewBox="0 0 16 16"><path d="M2 14l7-7" stroke="#1d72c4" stroke-width="3.500"/><path d="M15 4l-3 2-2-2 2-3c-4-1-6 3-4 6 2 3 8 1 7-3z" fill="#1d72c4"/></svg>
        </div>
    </div>
</body>
</html>
```
FILE: styles.css
```css
* {
    box-sizing: border-box;
}
body {
    margin: 0;
    font-family: "Noto Sans", "Noto Sans CJK SC", sans-serif;
    font-size: 12px;
    line-height: 16px;
    color: #000;
    background: #f0f0f0;
}
button, input, select {
    font: inherit;
    color: inherit;
    margin: 0;
    padding: 0;
    border: 0;
    border-radius: 0;
    background: none;
}
a {
    color: inherit;
    text-decoration: none;
}
.sprite {
    position: absolute;
    width: 0;
    height: 0;
}
.app {
    position: relative;
    display: flex;
    flex-direction: column;
    height: 100vh;
    overflow: hidden;
}
.ico {
    width: 16px;
    height: 16px;
    flex: none;
}

/* title and menu */
.titlebar {
    display: flex;
    align-items: center;
    gap: 5px;
    height: 24px;
    padding-left: 2px;
    background: #fff;
}
.titlebar h1 {
    flex: 1;
    margin: 0;
    font-family: Inter, "Noto Sans CJK SC", sans-serif;
    font-size: 12px;
    font-weight: normal;
    white-space: nowrap;
}
.winbtns {
    display: flex;
}
.winbtns button {
    width: 46px;
    height: 20px;
}
.winbtns svg {
    width: 12px;
    height: 12px;
    fill: none;
    stroke: #000;
}
.menubar {
    display: flex;
    align-items: center;
    height: 29px;
    white-space: nowrap;
}
.menubar nav {
    display: flex;
    gap: 11px;
    width: 787px;
    padding-left: 7px;
    flex: none;
}
.strip {
    display: flex;
    align-items: center;
    height: 27px;
    background: linear-gradient(#fdfdfd, #f1f1f1);
    border-radius: 2px;
    white-space: nowrap;
}
.notice {
    width: 188px;
    justify-content: center;
    color: #2c6408;
}
.account {
    flex: 1;
    margin-left: 2px;
    padding-left: 4px;
}
.more {
    align-self: flex-start;
    margin-left: auto;
    padding-right: 6px;
    font-size: 14px;
    line-height: 12px;
    font-weight: bold;
}

/* toolbar parts */
.btn {
    display: flex;
    align-items: center;
    gap: 4px;
    margin-right: 7px;
    flex: none;
}
.btn:disabled {
    color: #838383;
}
.btn.on {
    height: 23px;
    margin: 0 3px 0 -3px;
    padding: 0 3px 0 2px;
    border: 1px solid #3399ff;
    background: #e5f1fb;
}
.btn.strong {
    background: #c2e0ff;
}
.btn.drop {
    height: 23px;
    padding-left: 2px;
    background: #fff;
}
.tri {
    width: 7px;
    height: 3px;
    margin-left: 1px;
    background: linear-gradient(currentColor, currentColor);
    clip-path: polygon(0 0, 100% 0, 50% 100%);
}
.tri.tight {
    margin-left: -3px;
}
.sep {
    width: 1px;
    height: 16px;
    margin-right: 5px;
    background: #b4b4b4;
}
.grip {
    width: 3px;
    height: 15px;
    margin: 0 4px 0 3px;
    background: repeating-linear-gradient(#bbb 0 2px, transparent 2px 4px);
}
.combo {
    position: relative;
    width: 70px;
    height: 22px;
    margin: 0 4px 0 -2px;
    background: linear-gradient(90deg, #fff 58px, #f4f4f4 58px);
}
.combo.short {
    width: 58px;
    background: linear-gradient(90deg, #fff 46px, #f4f4f4 46px);
}
.combo select {
    width: 100%;
    height: 100%;
    padding-left: 2px;
    appearance: none;
}
.combo::after {
    content: "";
    position: absolute;
    right: 4px;
    top: 10px;
    border: 3px solid transparent;
    border-top-color: #000;
    border-bottom: 0;
}

.mainbar {
    display: flex;
    align-items: center;
    gap: 2px;
    height: 31px;
}
.quick {
    width: 151px;
    padding-left: 5px;
    flex: none;
}
.quick .btn {
    margin-right: 5px;
}
.tools {
    width: 550px;
    padding-left: 4px;
    flex: none;
}
.view {
    flex: 1;
}

main {
    display: flex;
    flex: 1;
    min-height: 0;
}

/* navigation panel */
aside {
    display: flex;
    flex-direction: column;
    width: 140px;
    margin-right: 4px;
    padding-bottom: 1px;
    flex: none;
    border-right: 1px solid #a0a0a0;
}
.panelhead {
    display: flex;
    align-items: center;
    gap: 5px;
    height: 16px;
    margin-bottom: 1px;
    padding-right: 3px;
    color: #fff;
    font-size: 13px;
    background: #0054e3;
}
.panelhead span {
    flex: 1;
}
.panelhead button {
    display: flex;
    padding: 1px;
}
.panelhead .pin {
    border: 1px solid #000;
    border-top-color: #9bbcf5;
    border-left-color: #9bbcf5;
}
.panelhead svg {
    height: 10px;
    fill: none;
    stroke: #fff;
}
.tab {
    height: 22px;
    border: 1px solid #a0a0a0;
    border-top-color: #fff;
    border-left-color: #fff;
    background: #f0f0f0;
    flex: none;
}
.expand {
    display: flex;
    align-items: center;
    gap: 6px;
    height: 28px;
    padding-left: 7px;
    background: linear-gradient(#fdfdfd, #f1f1f1);
    flex: none;
}
.expand button {
    display: flex;
}
.expand svg {
    width: 16px;
    height: 16px;
}
.treebox {
    display: flex;
    flex-direction: column;
    flex: 1;
    min-height: 0;
    margin: 0 2px 1px;
    border: 1px solid #828790;
    background: #fff;
}
.treerow {
    display: flex;
    flex: 1;
    min-height: 0;
}
.tree {
    flex: 1;
    min-width: 0;
    margin: 0;
    padding: 0;
    overflow: hidden;
    list-style: none;
    white-space: nowrap;
}
.tree li {
    position: relative;
    display: flex;
    align-items: center;
    height: 16px;
}
.tree b, .status {
    font-family: "DejaVu Sans Mono", "Noto Sans CJK SC", monospace;
    font-weight: normal;
    font-size: 10px;
}
.leaf {
    gap: 0;
    padding-left: 42px;
    background: repeating-linear-gradient(#888 0 1px, transparent 1px 2px) 12px 0 / 1px 100% no-repeat;
}
.leaf .ico {
    margin-right: 5px;
}
.leaf::before {
    content: "";
    position: absolute;
    left: 31px;
    top: 0;
    width: 10px;
    height: 9px;
    border-left: 1px dotted #888;
    border-bottom: 1px dotted #888;
}
.leaf::after {
    content: "";
    position: absolute;
    left: 31px;
    top: 9px;
    height: 7px;
    border-left: 1px dotted #888;
}
.leaf.end::after {
    display: none;
}
.picked span {
    flex: 1;
    margin-left: -5px;
    padding-left: 5px;
    background: #d9d9d9;
}
.folder {
    padding-left: 23px;
}
.folder .ico {
    margin-right: 4px;
}
.folder::before, .chev {
    content: "";
    width: 6px;
    height: 6px;
    border: solid #555;
    border-width: 0 2px 2px 0;
}
.folder::before {
    position: absolute;
    left: 7px;
    top: 5px;
    border-width: 0 1px 1px 0;
    transform: rotate(-45deg);
}
.folder.open::before {
    left: 8px;
    top: 3px;
    border-width: 0 2px 2px 0;
    transform: rotate(45deg);
}
.vscroll {
    display: flex;
    flex-direction: column;
    align-items: center;
    width: 16px;
    padding: 7px 0;
    background: #f0f0f0;
}
.vscroll .thumb {
    width: 15px;
    height: 246px;
    margin: auto 0 12px;
    background: #cdcdcd;
}
.hscroll {
    display: flex;
    align-items: center;
    height: 17px;
    padding: 0 23px 0 7px;
    background: #f0f0f0;
}
.hscroll .thumb {
    width: 63px;
    height: 15px;
    margin: 0 auto 0 5px;
    background: #cdcdcd;
}
.up {
    transform: rotate(-135deg);
}
.down {
    transform: rotate(45deg);
}
.left {
    transform: rotate(135deg);
}
.right {
    transform: rotate(-45deg);
}

/* drawing area */
.work {
    display: flex;
    flex-direction: column;
    flex: 1;
    min-width: 0;
}
.bar {
    display: flex;
    align-items: center;
    padding-left: 1px;
    flex: none;
}
.bar-edit {
    height: 27px;
}
.bar-comp {
    height: 28px;
}
.bar-draw {
    height: 29px;
}
.axis {
    margin-left: 72px;
}
.stub {
    width: 31px;
    margin-left: 544px;
}
.viewport {
    flex: 1;
    min-height: 0;
    margin-right: 1px;
    background: #000;
}
.viewport svg {
    display: block;
    width: 100%;
    height: 100%;
    fill: none;
}
.viewport g {
    shape-rendering: crispEdges;
}
.red {
    stroke: #f00;
}
.dark {
    stroke: #800000;
}
.green {
    stroke: #008000;
}
.bar1 {
    stroke: #a09088;
}
.bar2 {
    stroke: #a09088;
    stroke-width: 2;
}
.edge {
    stroke: #fff;
    stroke-width: 2;
}
.orbit {
    stroke: #fff;
    stroke-opacity: .42;
}
.num {
    fill: #d0d0d0;
    font: 15px "Liberation Sans", sans-serif;
}
.gizmo {
    font: 14px "Liberation Sans", sans-serif;
}

.bar-snap {
    height: 31px;
}
.coords {
    margin-left: 245px;
    color: #6d6d6d;
}
.coords select {
    color: #000;
}
.fld {
    margin: 0 2px 0 3px;
}
.coords .sep + .fld {
    margin-left: -2px;
}
.spin {
    position: relative;
    width: 58px;
    height: 23px;
    border: 1px solid #6d6d6d;
    background: #f4f4f4;
}
.spin.wide {
    width: 68px;
}
.spin input {
    width: 100%;
    height: 100%;
    padding-right: 18px;
    text-align: right;
}
.spin::before, .spin::after {
    content: "";
    position: absolute;
    right: 4px;
    border: 3px solid transparent;
}
.spin::before {
    top: 4px;
    border-top: 0;
    border-bottom-color: #555;
}
.spin::after {
    bottom: 4px;
    border-bottom: 0;
    border-top-color: #555;
}
.coords input[type="checkbox"] {
    appearance: none;
    width: 11px;
    height: 11px;
    border: 1px solid #8a8a8a;
}
.rotl {
    margin: 0 5px 0 8px;
    color: #000;
}

.status {
    display: flex;
    gap: 2px;
    height: 22px;
    padding-top: 2px;
    background: #fff;
    flex: none;
}
.status span {
    padding: 1px 0 0 1px;
    border: 1px solid #d4d4d4;
    background: linear-gradient(#fff, #f0f0f0);
    white-space: nowrap;
}
.status em {
    font-style: normal;
    font-size: 12px;
}
.c1 {
    width: 148px;
}
.c2 {
    width: 78px;
}
.c3 {
    width: 98px;
}
.c4 {
    width: 48px;
}
.c5 {
    flex: 1;
}
.c6 {
    width: 70px;
}

/* desktop taskbar */
.taskbar {
    display: flex;
    height: 40px;
    color: #fff;
    background: #010c10;
    flex: none;
}
.start {
    width: 48px;
    background: #000;
}
.start svg {
    width: 16px;
    height: 16px;
    display: block;
    margin: auto;
}
.search {
    display: flex;
    align-items: center;
    width: 344px;
    padding: 0 14px 0 9px;
    background: #333;
}
.search input {
    flex: 1;
    padding-left: 5px;
    font-size: 14px;
}
.search input::placeholder {
    color: #9a9a9a;
}
.cortana {
    width: 22px;
    height: 22px;
}
.mic {
    width: 12px;
    height: 18px;
}
.apps {
    display: flex;
    padding-left: 2px;
}
.apps button {
    width: 49px;
    display: flex;
    align-items: center;
    justify-content: center;
}
.apps .gap {
    width: 4px;
}
.apps svg {
    width: 24px;
    height: 24px;
}
.run {
    background: linear-gradient(#76b9ed, #76b9ed) center bottom / 40px 2px no-repeat;
}
.apps .current {
    background: linear-gradient(#76b9ed, #76b9ed) center bottom / 49px 2px no-repeat, #343d40;
}
.tray {
    display: flex;
    align-items: center;
    gap: 9px;
    margin-left: auto;
    margin-right: 3px;
    padding-right: 20px;
    border-right: 1px solid #555;
    font-size: 13px;
}
.tray svg {
    width: 16px;
    height: 16px;
}
.tray .kbd {
    width: 24px;
}
.tray .note {
    width: 18px;
}
.tray .ln {
    fill: none;
    stroke: #fff;
}
.tray time {
    width: 76px;
    font-size: 12px;
    line-height: 19px;
    text-align: center;
}

/* floating widgets over the window */
.speed {
    position: absolute;
    left: 589px;
    top: -28px;
    width: 48px;
    height: 48px;
    padding-top: 25px;
    border: 2px solid #b9b9b9;
    border-radius: 50%;
    color: #fff;
    font-weight: bold;
    text-align: center;
    background: #43c463;
    box-shadow: 0 2px 6px rgba(0, 0, 0, .35);
}
.ime {
    position: absolute;
    left: 611px;
    top: 38px;
    display: flex;
    align-items: center;
    gap: 6px;
    height: 24px;
    padding-right: 3px;
    border: 1px solid #a9bfdc;
    color: #1d72c4;
    font-size: 15px;
    font-weight: bold;
    background: #fcfdff;
}
.ime svg {
    width: 16px;
    height: 16px;
}
.ime .sogou {
    width: 28px;
    height: 28px;
}
```
